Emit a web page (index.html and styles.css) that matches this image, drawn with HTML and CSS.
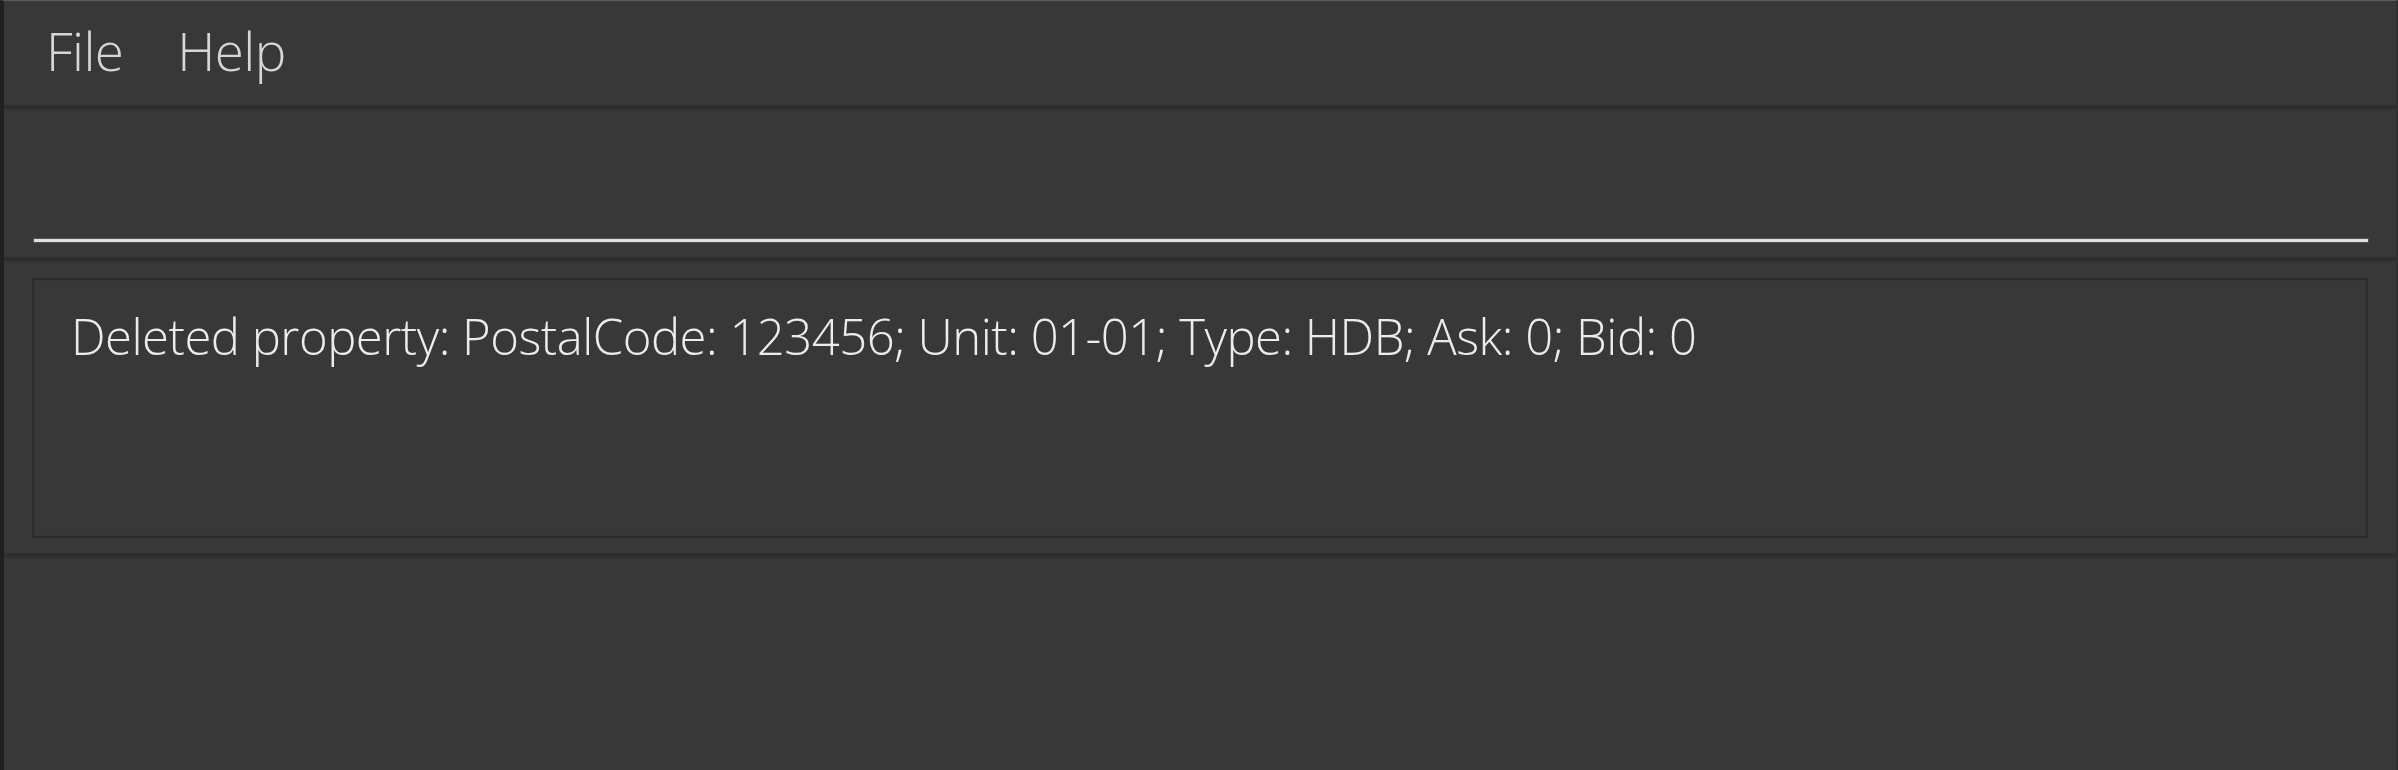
FILE: index.html
```html
<!DOCTYPE html>
<html>
<head>
<meta charset="utf-8">
<link rel="stylesheet" href="styles.css">
</head>
<body>
<div class="window">
  <div class="menubar">
    <span class="menu-item">File</span>
    <span class="menu-item">Help</span>
  </div>
  <div class="command-pane">
    <div class="command-box"></div>
  </div>
  <div class="result-pane">
    <div class="result-box">
      <p class="result-text">Deleted property: PostalCode: 123456; Unit: 01-01; Type: HDB; Ask: 0; Bid: 0</p>
    </div>
  </div>
  <div class="rest"></div>
</div>
</body>
</html>
```

FILE: styles.css
```css
html, body {
  margin: 0;
  padding: 0;
  background: #383838;
}
.window {
  box-sizing: border-box;
  width: 2398px;
  height: 770px;
  background: #383838;
  border-top: 1px solid #5c5c5c;
  border-left: 4px solid #1f2023;
  border-right: 2px solid #303030;
  display: flex;
  flex-direction: column;
  font-family: "Open Sans", "Noto Sans", sans-serif;
  font-weight: 300;
  overflow: hidden;
}
.menubar {
  height: 104px;
  display: flex;
  align-items: center;
  gap: 54px;
  padding-left: 42px;
  border-bottom: 3px solid #2e2e2e;
  box-shadow: 0 1px 3px rgba(0,0,0,0.25);
}
.menu-item {
  color: #d6d6d6;
  font-size: 53px;
  letter-spacing: -0.6px;
  line-height: 1;
  padding-bottom: 6px;
}
.command-pane {
  height: 149px;
  padding: 0 28px 0 30px;
  display: flex;
  align-items: flex-end;
  border-bottom: 3px solid #2e2e2e;
  box-shadow: 0 1px 3px rgba(0,0,0,0.25);
}
.command-box {
  flex: 1;
  height: 3px;
  margin-bottom: 15px;
  background: #e0e0e0;
  box-shadow: 0 0 1px 1px rgba(255,255,255,0.12);
}
.result-pane {
  height: 296px;
  box-sizing: border-box;
  padding: 18px 28px 15px 28px;
  border-bottom: 3px solid #2e2e2e;
  box-shadow: 0 1px 3px rgba(0,0,0,0.25);
}
.result-box {
  box-sizing: border-box;
  height: 100%;
  border: 2px solid #2d2d2d;
  box-shadow: inset 0 0 2px rgba(0,0,0,0.2);
  padding: 27px 0 0 37px;
}
.result-text {
  margin: 0;
  color: #ececec;
  font-size: 49px;
  letter-spacing: -0.5px;
  line-height: 1.2;
}
.rest {
  flex: 1;
}
```
